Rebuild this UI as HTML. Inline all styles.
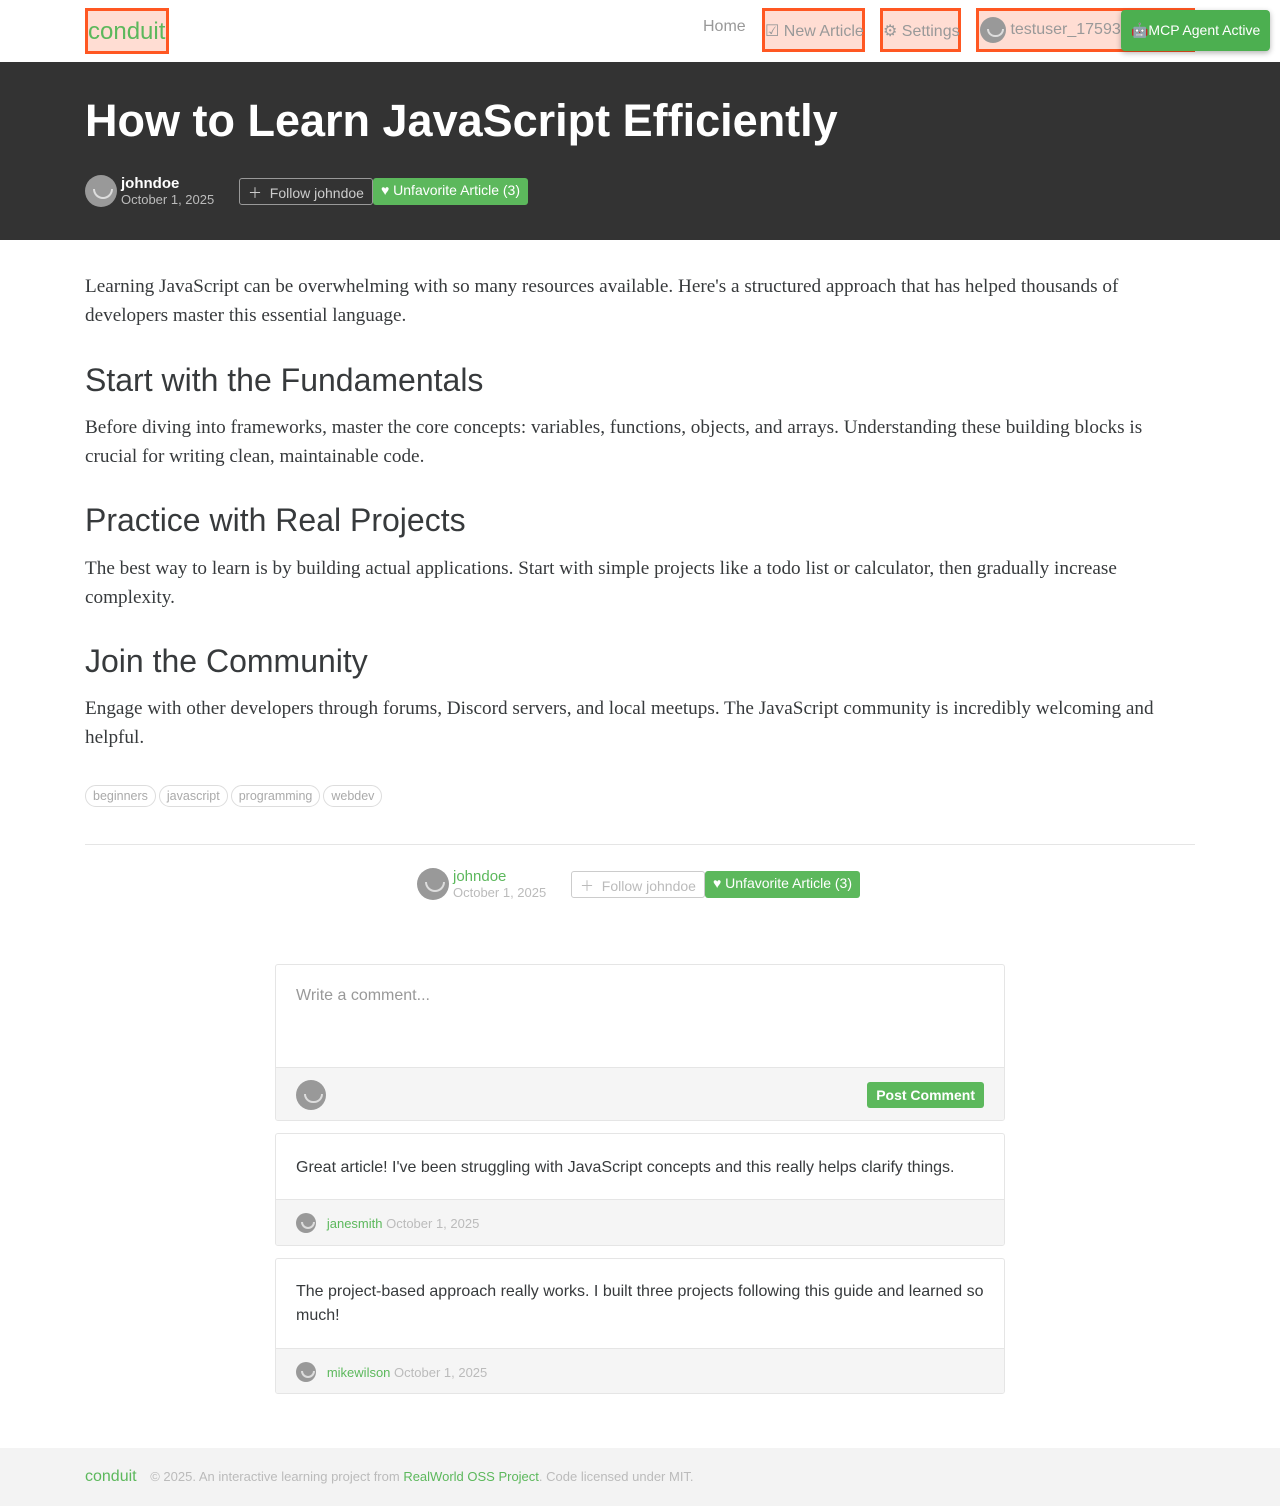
<!DOCTYPE html>
<html><head><meta charset="utf-8"><style>
*{box-sizing:border-box;margin:0;padding:0}
body{width:1280px;height:1506px;font-family:"Liberation Sans",sans-serif;color:#373a3c;background:#fff;position:relative;overflow:hidden}
nav{height:62px;position:relative}
.hl{position:absolute;border:3px solid #ff5722;background:rgba(255,87,34,.2)}
.logo{position:absolute;left:85px;top:8px;width:84px;height:46px;color:#5cb85c;font-size:24px;padding:7px 0 0 0}
.nl{position:absolute;top:18px;font-size:16px;color:#999}
.av{display:inline-block;border-radius:50%;background:#999;position:relative;vertical-align:middle}
.av:after{content:"";position:absolute;left:25%;top:45%;width:50%;height:25%;border:2px solid #ddd;border-top:none;border-radius:0 0 50% 50%/0 0 100% 100%}
.mcp{position:absolute;left:1121px;top:10px;width:149px;height:41px;background:#4caf50;color:#fff;border-radius:4px;font-size:14px;padding:12px 0 0 10px;box-shadow:0 2px 6px rgba(0,0,0,.3)}
.banner{background:#333;height:178px;color:#fff}
h1{position:absolute;left:85px;top:95px;font-size:45px;font-weight:bold}
.meta{position:absolute;display:flex;align-items:center}
.btnf{border:1px solid #999;color:#ccc;font-size:14px;height:27px;padding:4px 8px;border-radius:3px}
.btnu{background:#5cb85c;color:#fff;font-size:14px;height:27px;padding:4px 8px;border-radius:3px}
.body p{font-family:"Liberation Serif",serif;font-size:19.2px;line-height:29px;position:absolute;left:85px;width:1110px}
.body h2{position:absolute;left:85px;font-size:32px;font-weight:normal}
.tag{display:inline-block;border:1px solid #ddd;border-radius:12px;font-size:12.5px;color:#aaa;padding:3px 7px;margin-right:3px}
.card{position:absolute;left:275px;width:730px;border:1px solid #e5e5e5;border-radius:3px;overflow:hidden}
.cf{background:#f5f5f5;border-top:1px solid #e5e5e5;font-size:13px;color:#bbb;display:flex;align-items:center;padding-left:20px}
</style></head><body>
<nav>
<div class="hl logo">conduit</div>
<div class="nl" style="left:703px">Home</div>
<div class="hl" style="left:762px;top:8px;width:103px;height:44px"></div>
<div class="nl" style="left:765px;top:21px">☑ New Article</div>
<div class="hl" style="left:880px;top:8px;width:81px;height:44px"></div>
<div class="nl" style="left:883px;top:21px">⚙ Settings</div>
<div class="hl" style="left:976px;top:8px;width:219px;height:44px"></div>
<div class="nl" style="left:980px;top:17px"><span class="av" style="width:26px;height:26px"></span> testuser_17593</div>
<div class="mcp">🤖MCP Agent Active</div>
</nav>
<div class="banner"></div>
<h1 style="color:#fff">How to Learn JavaScript Efficiently</h1>
<div class="meta" style="left:85px;top:175px">
<span class="av" style="width:32px;height:32px"></span>
<div style="margin-left:4px;width:118px"><div style="color:#fff;font-size:15px;font-weight:bold">johndoe</div><div style="color:#bbb;font-size:13px">October 1, 2025</div></div>
<span class="btnf">＋&nbsp; Follow johndoe</span><span class="btnu">♥ Unfavorite Article (3)</span>
</div>
<div class="body">
<p style="top:272px">Learning JavaScript can be overwhelming with so many resources available. Here's a structured approach that has helped thousands of developers master this essential language.</p>
<h2 style="top:362px">Start with the Fundamentals</h2>
<p style="top:413px">Before diving into frameworks, master the core concepts: variables, functions, objects, and arrays. Understanding these building blocks is crucial for writing clean, maintainable code.</p>
<h2 style="top:502px">Practice with Real Projects</h2>
<p style="top:554px">The best way to learn is by building actual applications. Start with simple projects like a todo list or calculator, then gradually increase complexity.</p>
<h2 style="top:643px">Join the Community</h2>
<p style="top:694px">Engage with other developers through forums, Discord servers, and local meetups. The JavaScript community is incredibly welcoming and helpful.</p>
</div>
<div style="position:absolute;left:85px;top:785px"><span class="tag">beginners</span><span class="tag">javascript</span><span class="tag">programming</span><span class="tag">webdev</span></div>
<div style="position:absolute;left:85px;top:844px;width:1110px;border-top:1px solid #e5e5e5"></div>
<div class="meta" style="left:417px;top:868px">
<span class="av" style="width:32px;height:32px"></span>
<div style="margin-left:4px;width:118px"><div style="color:#5cb85c;font-size:15px">johndoe</div><div style="color:#bbb;font-size:13px">October 1, 2025</div></div>
<span class="btnf" style="border-color:#ccc;color:#bbb">＋&nbsp; Follow johndoe</span><span class="btnu">♥ Unfavorite Article (3)</span>
</div>
<div class="card" style="top:964px;height:157px">
<div style="height:102px;padding:22px 20px;color:#999;font-size:16px">Write a comment...</div>
<div class="cf" style="height:55px;justify-content:space-between;padding-right:20px"><span class="av" style="width:30px;height:30px"></span><span style="background:#5cb85c;color:#fff;font-weight:bold;font-size:14px;padding:5px 9px;border-radius:3px">Post Comment</span></div>
</div>
<div class="card" style="top:1133px;height:113px">
<div style="height:65px;padding:22px 20px;font-size:16px;line-height:24px">Great article! I've been struggling with JavaScript concepts and this really helps clarify things.</div>
<div class="cf" style="height:47px"><span class="av" style="width:20px;height:20px"></span>&nbsp;&nbsp;&nbsp;<span style="color:#5cb85c">janesmith</span>&nbsp;October 1, 2025</div>
</div>
<div class="card" style="top:1258px;height:136px">
<div style="height:89px;padding:21px 20px;font-size:16px;line-height:24px">The project-based approach really works. I built three projects following this guide and learned so much!</div>
<div class="cf" style="height:47px"><span class="av" style="width:20px;height:20px"></span>&nbsp;&nbsp;&nbsp;<span style="color:#5cb85c">mikewilson</span>&nbsp;October 1, 2025</div>
</div>
<div style="position:absolute;left:0;top:1448px;width:1280px;height:58px;background:#f3f3f3;padding:20px 0 0 85px;font-size:13px;color:#bbb"><span style="color:#5cb85c;font-size:16px;margin-right:10px">conduit</span> © 2025. An interactive learning project from <span style="color:#5cb85c">RealWorld OSS Project</span>. Code licensed under MIT.</div>
</body></html>
